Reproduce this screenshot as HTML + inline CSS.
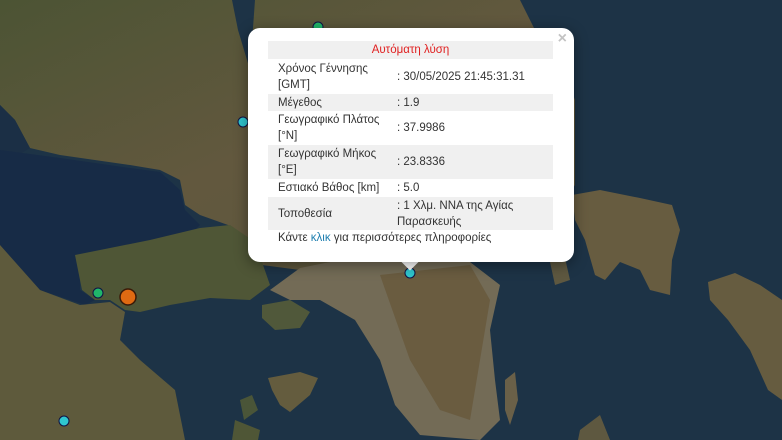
<!DOCTYPE html>
<html><head><meta charset="utf-8"><style>
html,body{margin:0;padding:0;width:782px;height:440px;overflow:hidden;background:#1f3448;}
#map{position:absolute;left:0;top:0}
.pop{position:absolute;left:248px;top:28px;width:326px;height:234px;background:#fff;border-radius:12px;box-shadow:0 3px 14px rgba(0,0,0,.4);font-family:"Liberation Sans","Noto Sans CJK SC",sans-serif;font-size:11.5px;color:#333;}
.tip{position:absolute;left:404px;top:256px;width:12px;height:12px;background:#fff;transform:rotate(45deg);}
.x{position:absolute;right:7px;top:2px;color:#c3c3c3;font-size:16px;font-weight:bold;font-family:"Liberation Sans",sans-serif;}
table{position:absolute;left:20px;top:13px;width:285px;border-collapse:collapse;table-layout:fixed;}
td{padding:0 0 0 10px;vertical-align:middle;line-height:16px;}
tr.g{background:#f0f0f0;}
td.v{padding-left:0;}
.ft{position:absolute;left:30px;top:204px;}
</style></head><body>
<svg id="map" width="782" height="440" viewBox="0 0 782 440">
<defs>
<linearGradient id="lg" x1="0" y1="0" x2="1" y2="1"><stop offset="0" stop-color="#4c5434"/><stop offset=".5" stop-color="#62583e"/><stop offset="1" stop-color="#5c573c"/></linearGradient>
</defs>
<rect width="782" height="440" fill="#1d3346"/>
<path d="M0,0 L232,0 L238,30 L250,70 L255,0 L520,0 L535,30 L560,60 L575,100 L575,185 L540,240 L520,262 L460,262 L330,262 L300,270 L262,265 L250,240 L228,225 L200,215 L185,205 L180,180 L160,170 L130,165 L60,155 L30,148 L15,120 L0,105 Z" fill="url(#lg)"/>
<path d="M0,105 L15,120 L30,148 L10,160 L0,160 Z" fill="#1b2f45"/>
<path d="M0,150 L60,158 L130,168 L160,172 L180,190 L185,210 L200,225 L190,235 L150,240 L110,250 L80,258 L80,290 L95,300 L85,305 L40,290 L0,250 Z" fill="#172b46"/>
<path d="M75,255 L110,248 L150,240 L200,228 L230,225 L252,240 L262,262 L270,285 L250,300 L210,298 L170,305 L140,312 L125,310 L110,300 L95,300 L82,290 Z" fill="#4f5636"/>
<path d="M0,245 L40,290 L80,305 L110,302 L125,312 L120,340 L140,360 L175,390 L185,440 L0,440 Z" fill="#5e5a3c"/>
<path d="M300,268 L330,262 L470,262 L500,285 L490,330 L495,380 L500,420 L480,440 L420,435 L395,405 L380,360 L355,320 L320,300 L290,300 L270,290 Z" fill="#736b56"/>
<path d="M380,275 L470,265 L490,300 L480,360 L470,420 L440,410 L410,360 Z" fill="#6a5c40"/>
<path d="M262,305 L290,300 L310,312 L300,328 L275,330 L262,318 Z" fill="#50583a"/>
<path d="M268,378 L300,372 L318,378 L310,395 L290,412 L280,405 L272,390 Z" fill="#645c3e"/>
<path d="M240,400 L252,395 L258,410 L244,420 Z" fill="#4a5538"/>
<path d="M572,195 L600,190 L640,198 L672,205 L680,230 L672,260 L670,295 L650,290 L640,270 L620,262 L605,280 L595,275 L585,240 L575,220 Z" fill="#675c40"/>
<path d="M550,262 L565,258 L570,280 L555,285 Z" fill="#5e5840"/>
<path d="M708,282 L735,273 L760,285 L782,300 L782,400 L768,390 L750,350 L728,320 L710,300 Z" fill="#665c40"/>
<path d="M505,380 L515,372 L518,400 L510,425 L505,410 Z" fill="#6a6048"/>
<path d="M580,430 L600,415 L610,440 L578,440 Z" fill="#5e5840"/>
<path d="M235,420 L260,430 L258,440 L232,440 Z" fill="#4f5636"/>
<circle cx="243" cy="122" r="5" fill="#2fc6cf" stroke="#114" stroke-width="1"/>
<circle cx="410" cy="273" r="5" fill="#2fc6cf" stroke="#114" stroke-width="1"/>
<circle cx="64" cy="421" r="5" fill="#2fc6cf" stroke="#114" stroke-width="1"/>
<circle cx="98" cy="293" r="5" fill="#20b66a" stroke="#114" stroke-width="1"/>
<circle cx="318" cy="27" r="5" fill="#20b66a" stroke="#114" stroke-width="1"/>
<circle cx="128" cy="297" r="8" fill="#e06a12" stroke="#3a1a08" stroke-width="1.5"/>
</svg>
<div class="tip"></div>
<div class="pop">
<div class="x">×</div>
<table>
<colgroup><col style="width:129px"><col style="width:156px"></colgroup>
<tr class="g"><td colspan="2" style="text-align:center;color:#e02020;height:18px;padding:0">Αυτόματη λύση</td></tr>
<tr><td style="height:35px">Χρόνος Γέννησης<br>[GMT]</td><td class="v">: 30/05/2025 21:45:31.31</td></tr>
<tr class="g"><td style="height:17px">Μέγεθος</td><td class="v">: 1.9</td></tr>
<tr><td style="height:34px">Γεωγραφικό Πλάτος<br>[°N]</td><td class="v">: 37.9986</td></tr>
<tr class="g"><td style="height:34px">Γεωγραφικό Μήκος<br>[°E]</td><td class="v">: 23.8336</td></tr>
<tr><td style="height:18px">Εστιακό Βάθος [km]</td><td class="v">: 5.0</td></tr>
<tr class="g"><td style="height:33px">Τοποθεσία</td><td class="v">: 1 Χλμ. ΝΝΑ της Αγίας<br>Παρασκευής</td></tr>
</table>
<div class="ft">Κάντε <span style="color:#1f7fb0">κλικ</span> για περισσότερες πληροφορίες</div>
</div>
</body></html>
